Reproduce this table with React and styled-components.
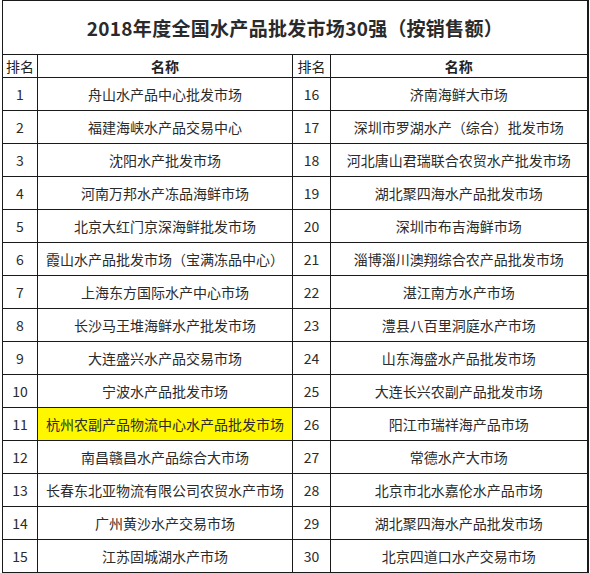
import React from "react";
import styled, { createGlobalStyle } from "styled-components";

const GlobalStyle = createGlobalStyle`
    html, body {
        margin: 0;
        padding: 0;
        background: #fff;
    }
    body {
        font-family: "Microsoft YaHei", "Noto Sans CJK SC", "Liberation Sans", sans-serif;
        color: #2b2b2b;
    }
`;

const rows = [
    ["1", "舟山水产品中心批发市场", "16", "济南海鲜大市场"],
    ["2", "福建海峡水产品交易中心", "17", "深圳市罗湖水产（综合）批发市场"],
    ["3", "沈阳水产批发市场", "18", "河北唐山君瑞联合农贸水产批发市场"],
    ["4", "河南万邦水产冻品海鲜市场", "19", "湖北聚四海水产品批发市场"],
    ["5", "北京大红门京深海鲜批发市场", "20", "深圳市布吉海鲜市场"],
    ["6", "霞山水产品批发市场（宝满冻品中心）", "21", "淄博淄川澳翔综合农产品批发市场"],
    ["7", "上海东方国际水产中心市场", "22", "湛江南方水产市场"],
    ["8", "长沙马王堆海鲜水产批发市场", "23", "澧县八百里洞庭水产市场"],
    ["9", "大连盛兴水产品交易市场", "24", "山东海盛水产品批发市场"],
    ["10", "宁波水产品批发市场", "25", "大连长兴农副产品批发市场"],
    ["11", "杭州农副产品物流中心水产品批发市场", "26", "阳江市瑞祥海产品市场"],
    ["12", "南昌赣昌水产品综合大市场", "27", "常德水产大市场"],
    ["13", "长春东北亚物流有限公司农贸水产市场", "28", "北京市北水嘉伦水产品市场"],
    ["14", "广州黄沙水产交易市场", "29", "湖北聚四海水产品批发市场"],
    ["15", "江苏固城湖水产市场", "30", "北京四道口水产交易市场"],
];

// 전각 괄호는 폭을 1em으로 고정
const withParens = (text) =>
    text.split(/([（）])/).map((part, i) =>
        part === "（" || part === "）" ? <Paren key={i}>{part}</Paren> : part
    );

const App = () => {
    return (
        <Page>
            <GlobalStyle />
            <RankTable>
                <colgroup>
                    <col style={{ width: 35 }} />
                    <col style={{ width: 255 }} />
                    <col style={{ width: 38 }} />
                    <col style={{ width: 257 }} />
                </colgroup>
                <tbody>
                    <tr>
                        <TitleCell colSpan={4}>{withParens("2018年度全国水产品批发市场30强（按销售额）")}</TitleCell>
                    </tr>
                    <tr>
                        <HeadCell>排名</HeadCell>
                        <HeadCell bold>名称</HeadCell>
                        <HeadCell>排名</HeadCell>
                        <HeadCell bold>名称</HeadCell>
                    </tr>
                    {rows.map(([r1, n1, r2, n2]) => (
                        <tr key={r1}>
                            <NumCell>{r1}</NumCell>
                            <NameCell highlight={r1 === "11"}>{withParens(n1)}</NameCell>
                            <NumCell>{r2}</NumCell>
                            <NameCell>{withParens(n2)}</NameCell>
                        </tr>
                    ))}
                </tbody>
            </RankTable>
        </Page>
    );
};

// 스타일
const Page = styled.div`
    padding: 0 0 0 2px;
    width: 590px;
    box-sizing: border-box;
`;

const RankTable = styled.table`
    border-collapse: collapse;
    table-layout: fixed;
    width: 586px;
    border-right: 2px solid #1a1a1a;

    td {
        border: 1px solid #1a1a1a;
        padding: 0;
        text-align: center;
        white-space: nowrap;
        overflow: hidden;
    }
`;

const Paren = styled.span`
    display: inline-block;
    width: 1em;
    text-align: center;
`;

const TitleCell = styled.td`
    height: 53px;
    font-size: 19px;
    font-weight: bold;
    color: #2a2a2a;
    letter-spacing: 0.3px;
`;

const HeadCell = styled.td`
    height: 22px;
    font-size: 14px;
    font-weight: ${props => (props.bold ? "bold" : "normal")};
    color: #222;
`;

const NumCell = styled.td`
    height: 32px;
    font-size: 14px;
    color: #2b2b2b;
`;

const NameCell = styled.td`
    height: 32px;
    font-size: 14px;
    color: #2b2b2b;
    background: ${props => (props.highlight ? "#fff700" : "transparent")};
`;

export default App;
